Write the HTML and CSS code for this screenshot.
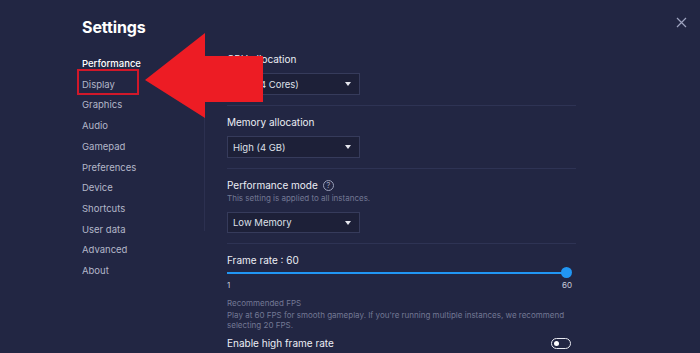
FILE: index.html
```html
<!DOCTYPE html>
<html>
<head>
<meta charset="utf-8">
<link rel="stylesheet" href="styles.css">
</head>
<body>
<div class="page">
  <h1 class="title">Settings</h1>
  <button class="close" aria-label="Close">
    <svg width="11" height="11" viewBox="0 0 11 11"><path d="M1 1L10 10M10 1L1 10" stroke="#9ea3bf" stroke-width="1.2" fill="none"/></svg>
  </button>
  <div class="layout">
    <nav class="sidebar">
      <a class="nav-item active">Performance</a>
      <a class="nav-item">Display</a>
      <a class="nav-item">Graphics</a>
      <a class="nav-item">Audio</a>
      <a class="nav-item">Gamepad</a>
      <a class="nav-item">Preferences</a>
      <a class="nav-item">Device</a>
      <a class="nav-item">Shortcuts</a>
      <a class="nav-item">User data</a>
      <a class="nav-item">Advanced</a>
      <a class="nav-item">About</a>
    </nav>
    <div class="divider"></div>
    <main class="main">
      <section class="section">
        <div class="label">CPU allocation</div>
        <div class="select"><span>High (4 Cores)</span><span class="caret"></span></div>
      </section>
      <section class="section">
        <div class="label">Memory allocation</div>
        <div class="select"><span>High (4 GB)</span><span class="caret"></span></div>
      </section>
      <section class="section">
        <div class="label">Performance mode <span class="help">?</span></div>
        <div class="sub">This setting is applied to all instances.</div>
        <div class="select small"><span>Low Memory</span><span class="caret"></span></div>
      </section>
      <section class="section last">
        <div class="label flush">Frame rate : 60</div>
        <div class="slider"><div class="track"></div><div class="thumb"></div></div>
        <div class="range"><span>1</span><span>60</span></div>
        <div class="sub rec">Recommended FPS</div>
        <div class="sub desc">Play at 60 FPS for smooth gameplay. If you're running multiple instances, we recommend selecting 20 FPS.</div>
        <div class="toggle-row">
          <span class="label">Enable high frame rate</span>
          <span class="toggle"><span class="knob"></span></span>
        </div>
      </section>
    </main>
  </div>
  <div class="highlight"></div>
  <svg class="arrow" width="125" height="90" viewBox="0 0 125 90">
    <polygon points="0,47 60,0 60,23 118,23 118,69 60,69 60,85" fill="#ed1c24"/>
  </svg>
</div>
</body>
</html>
```

FILE: styles.css
```css
* { box-sizing: border-box; margin: 0; padding: 0; }
html, body { width: 700px; height: 353px; overflow: hidden; }
body {
  background: #222643;
  font-family: "Inter", "Noto Sans", sans-serif;
  color: #e6e7ef;
}
.page {
  position: relative;
  width: 700px;
  height: 353px;
  padding: 15px 0 0 82px;
}
.title {
  font-size: 16px;
  font-weight: 700;
  line-height: 24px;
  color: #ffffff;
  letter-spacing: -0.1px;
}
.close {
  position: absolute;
  right: 13px;
  top: 17px;
  background: none;
  border: none;
  width: 11px;
  height: 11px;
  display: block;
}
.close svg { display: block; }
.layout {
  display: flex;
  align-items: flex-start;
  margin-top: 4px;
}
.sidebar {
  width: 122px;
  display: flex;
  flex-direction: column;
  padding-top: 11px;
}
.nav-item {
  font-size: 9.5px;
  line-height: 20.7px;
  color: #b3b7c9;
}
.nav-item.active { color: #ffffff; font-weight: 500; }
.divider {
  width: 1px;
  height: 186px;
  background: #2c3050;
  margin-top: 2px;
}
.main {
  width: 371px;
  padding-left: 22px;
}
.section {
  padding: 9px 0 10px;
  border-bottom: 1px solid #2e3354;
}
.section.last { border-bottom: none; }
.label {
  font-size: 10px;
  line-height: 14px;
  color: #eceef5;
  display: flex;
  align-items: center;
}
.section > .label { margin-bottom: 7px; }
.section > .label.flush { margin-bottom: 0; }
.help {
  display: inline-flex;
  align-items: center;
  justify-content: center;
  width: 11px;
  height: 11px;
  border: 1px solid #9a9fb8;
  border-radius: 50%;
  font-size: 8px;
  color: #9a9fb8;
  margin-left: 5px;
  line-height: 1;
}
.sub {
  font-size: 8px;
  line-height: 12px;
  color: #737894;
}
.section .sub + .select { margin-top: 8px; }
.section > .label + .sub { margin-top: -7px; }
.select {
  width: 133px;
  height: 22px;
  background: #1d2038;
  border: 1px solid #363b5b;
  display: flex;
  align-items: center;
  justify-content: space-between;
  padding: 0 8px 0 5px;
  font-size: 9.5px;
  color: #dfe1ea;
}
.select.small { height: 21px; }
.caret {
  width: 0;
  height: 0;
  border-left: 3.5px solid transparent;
  border-right: 3.5px solid transparent;
  border-top: 4px solid #e6e7ef;
}
.slider {
  position: relative;
  width: 345px;
  height: 12px;
  display: flex;
  align-items: center;
}
.track {
  width: 339px;
  height: 2px;
  background: #2196f3;
}
.thumb {
  position: absolute;
  left: 334px;
  top: 0;
  width: 11px;
  height: 11px;
  border-radius: 50%;
  background: #2196f3;
}
.range {
  width: 345px;
  display: flex;
  justify-content: space-between;
  font-size: 8px;
  line-height: 12px;
  color: #c9ccda;
}
.sub.rec { margin-top: 6px; }
.sub.desc { line-height: 10px; width: 345px; padding-top: 1px; }
.toggle-row {
  width: 345px;
  display: flex;
  justify-content: space-between;
  align-items: center;
  margin-top: 6px;
}
.toggle {
  width: 20px;
  height: 11px;
  border: 1.2px solid #e8e9f0;
  border-radius: 6px;
  display: flex;
  align-items: center;
  padding-left: 2px;
  margin-right: 1px;
}
.knob {
  width: 5px;
  height: 5px;
  border-radius: 50%;
  background: #ffffff;
}
.highlight {
  position: absolute;
  left: 77px;
  top: 69px;
  width: 62px;
  height: 26px;
  border: 2px solid #d0182a;
}
.arrow {
  position: absolute;
  left: 145px;
  top: 33px;
}
```
